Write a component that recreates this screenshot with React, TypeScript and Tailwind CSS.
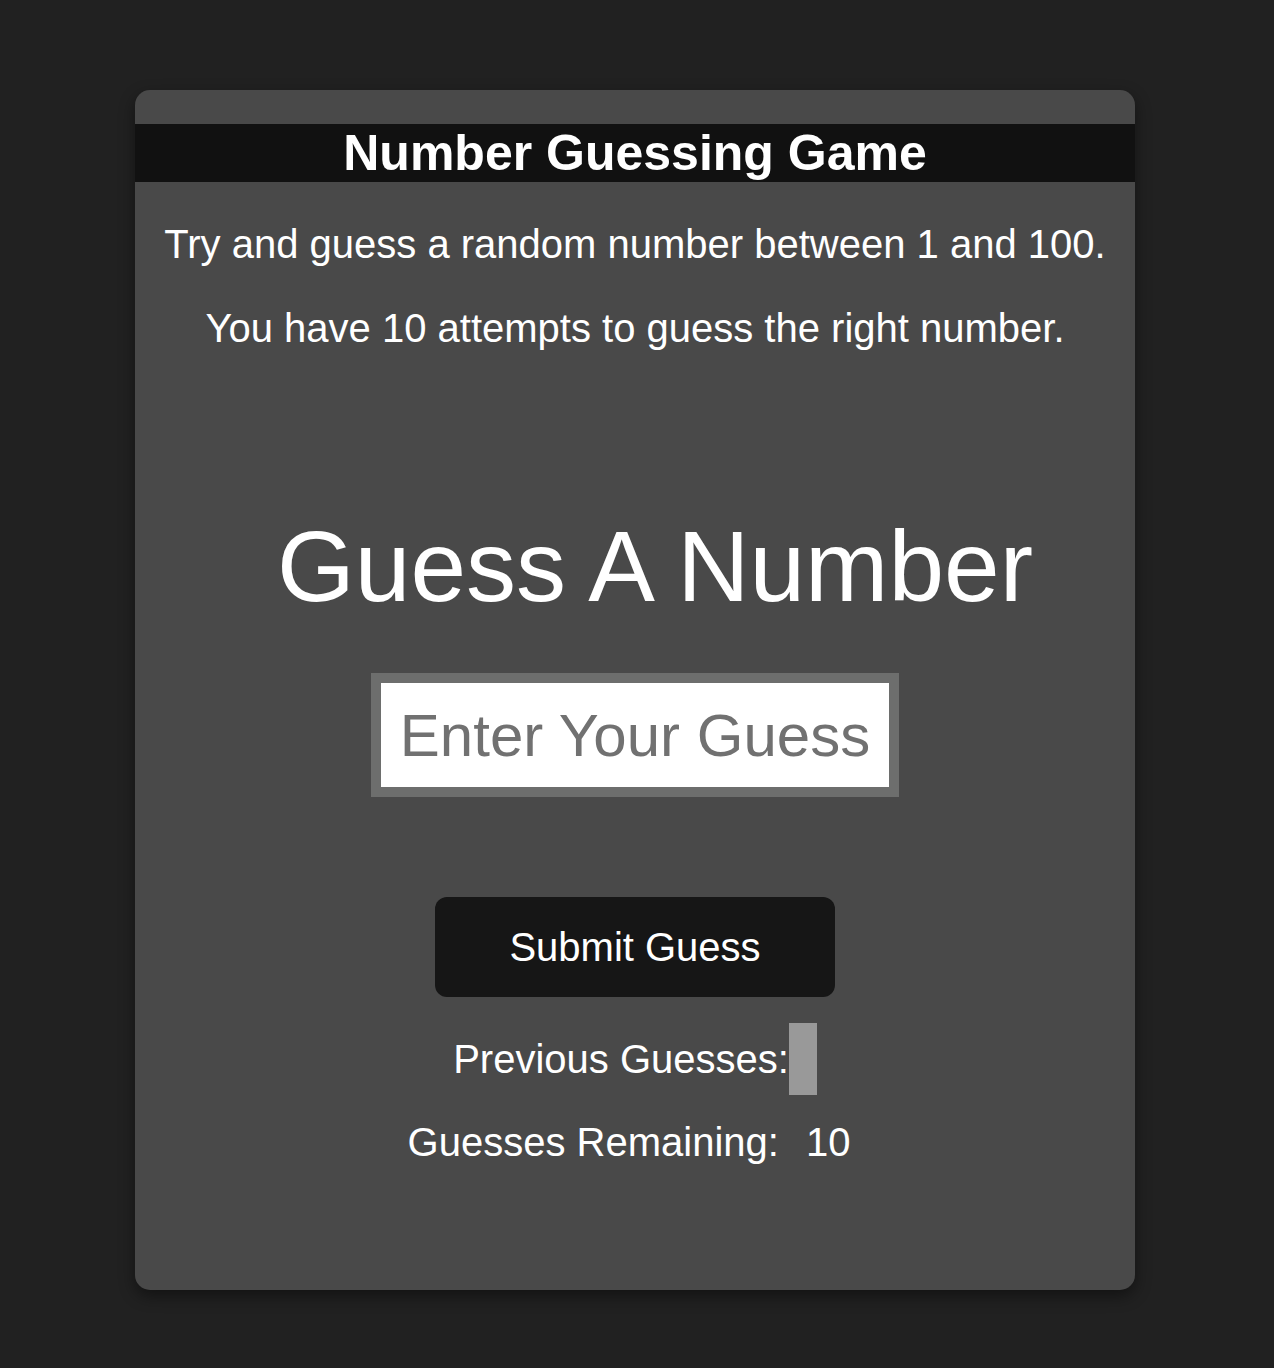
import { useState } from 'react';

export default function App() {
  const [guess, setGuess] = useState('');
  const remaining = 10;

  return (
    <div className="min-h-screen bg-[#212121] pt-[90px] pb-[78px] font-['Liberation_Sans',Arial,sans-serif] text-white">
      <div className="ml-[135px] flex h-[1200px] w-[1000px] flex-col items-center rounded-[15px] bg-[#494949] shadow-[0_6px_16px_rgba(0,0,0,0.45)]">
        {/* Title bar */}
        <h1 className="mt-[34px] h-[58px] w-full bg-[#111111] text-center text-[50px] font-bold leading-[58px]">
          Number Guessing Game
        </h1>

        <p className="mt-[39px] text-center text-[40px] leading-[46px]">
          Try and guess a random number between 1 and 100.
        </p>
        <p className="mt-[38px] text-center text-[40px] leading-[46px]">
          You have 10 attempts to guess the right number.
        </p>

        <h2 className="mt-[158px] pl-[40px] text-center text-[100px] leading-[115px]">
          Guess A Number
        </h2>

        <input
          type="text"
          value={guess}
          onChange={(e) => setGuess(e.target.value)}
          placeholder="Enter Your Guess"
          className="mt-[49px] h-[124px] w-[528px] border-[10px] border-[#6d6e6d] bg-white text-center text-[60px] text-black outline-none placeholder:text-[#717171]"
        />

        <button className="mt-[100px] h-[100px] w-[400px] rounded-[12px] bg-[#161616] text-[40px] text-white">
          Submit Guess
        </button>

        <div className="mt-[26px] flex h-[72px] items-center justify-center">
          <span className="text-[40px] leading-[46px]">Previous Guesses:</span>
          <span className="inline-block h-[72px] w-[28px] bg-[#999999]"></span>
        </div>

        <div className="mt-[24px] flex items-center justify-center pr-[12px] text-[40px] leading-[46px]">
          <span>Guesses Remaining:</span>
          <span className="ml-[27px]">{remaining}</span>
        </div>
      </div>
    </div>
  );
}
